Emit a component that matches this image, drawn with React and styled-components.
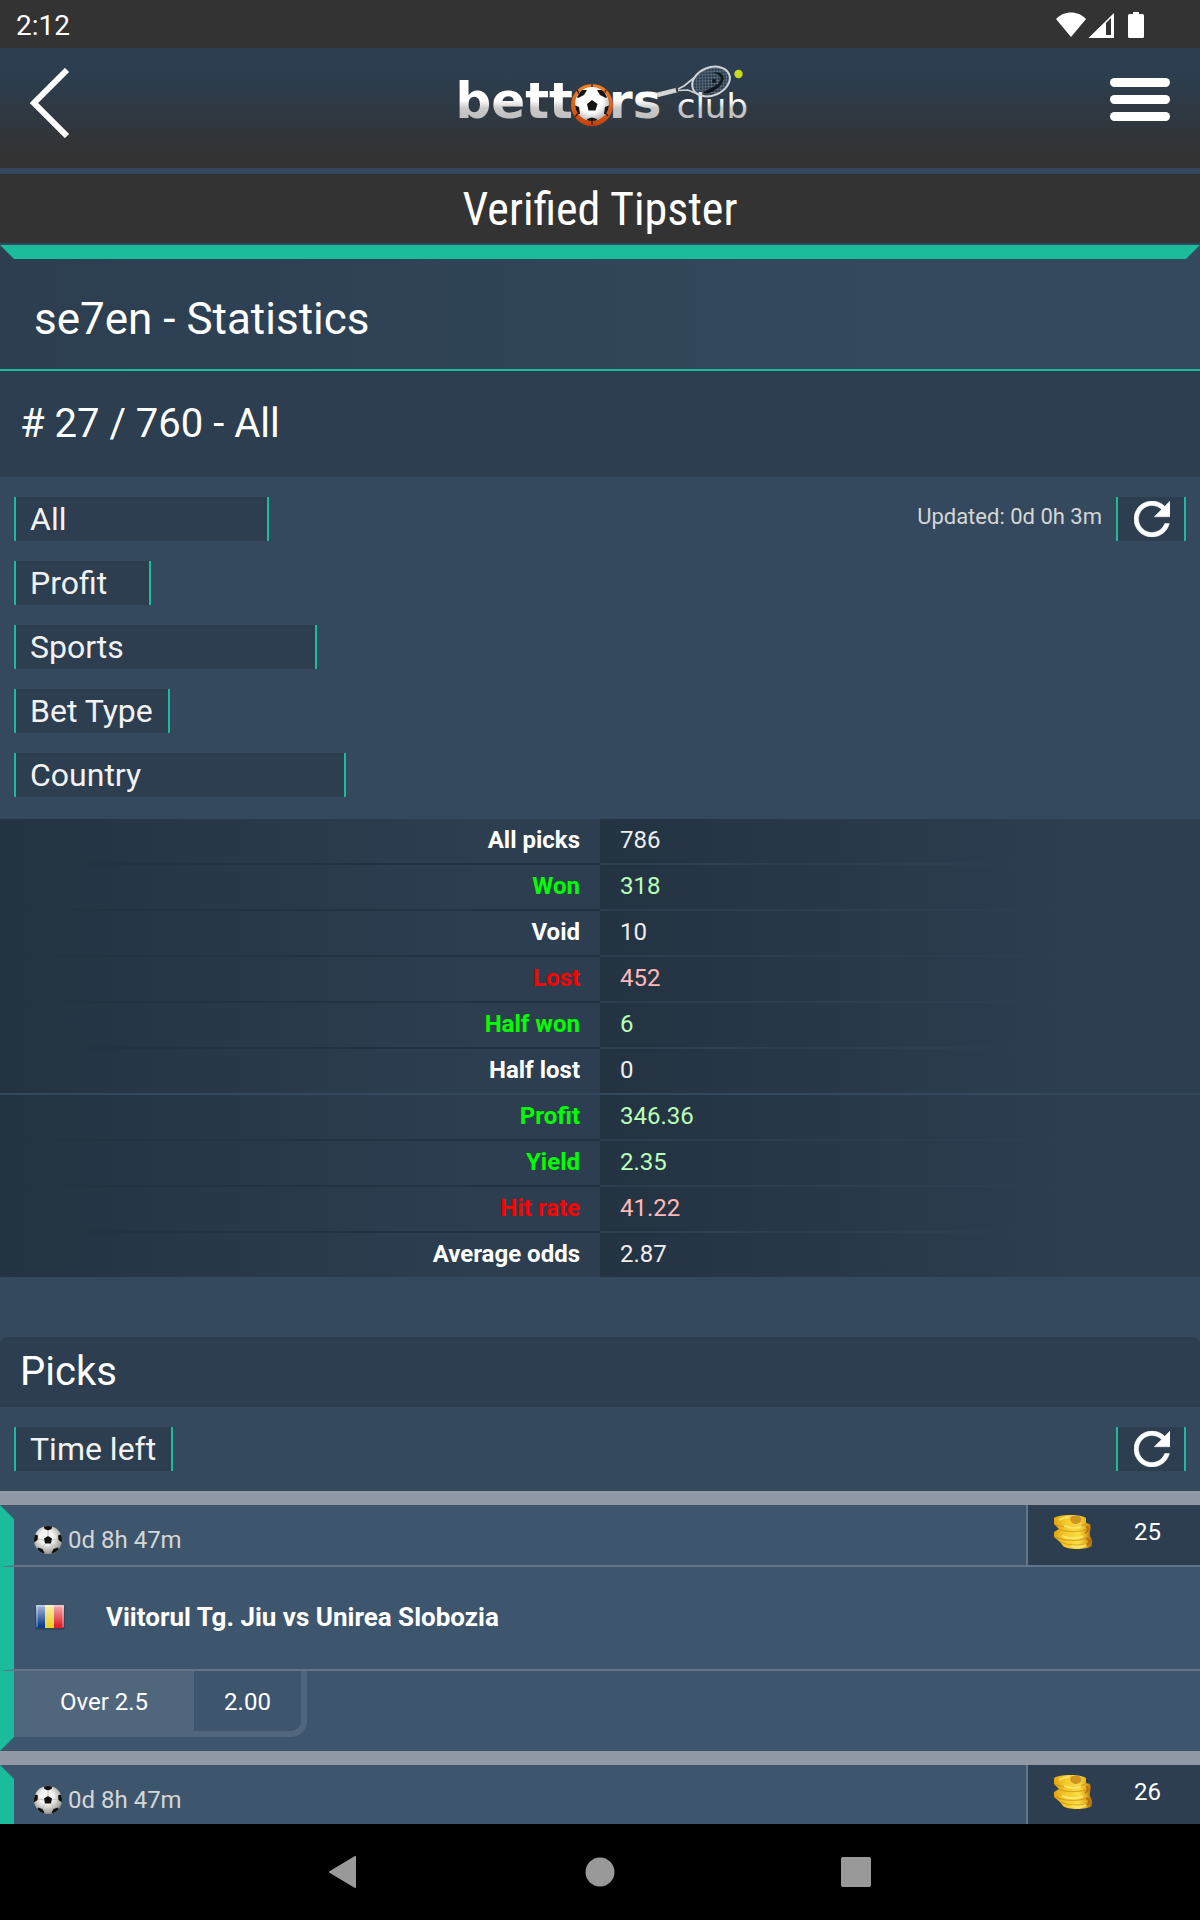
import React from "react";
import styled, { createGlobalStyle, css } from "styled-components";

const colors = {
  bar: "#333333",
  dark: "#2c3e50",
  darker: "#243342",
  base: "#34495e",
  card: "#3d566e",
  line: "#637588",
  accent: "#1abc9c",
  divider: "#9099a5",
  box: "#50667c"
};

const GlobalStyle = createGlobalStyle`
  * {
    box-sizing: border-box;
  }
  body {
    margin: 0;
    background: ${colors.base};
    color: #fff;
    font-family: Roboto, "Liberation Sans", sans-serif;
    font-size: 24px;
  }
  button, select {
    font-family: inherit;
    color: inherit;
    margin: 0;
    border-radius: 0;
  }
  svg {
    display: block;
  }
`;

const Screen = styled.div`
  display: flex;
  flex-direction: column;
  height: 100vh;
  overflow: hidden;
`;

const StatusBar = styled.div`
  display: flex;
  flex: none;
  justify-content: space-between;
  align-items: center;
  height: 48px;
  padding: 2px 56px 0 16px;
  background: ${colors.bar};
  font-size: 28px;
`;

const Header = styled.header`
  display: grid;
  flex: none;
  grid-template-columns: 1fr auto 1fr;
  align-items: center;
  height: 120px;
  padding: 0 30px 10px;
  margin-bottom: 6px;
  background: linear-gradient(${colors.dark} 20%, ${colors.bar} 90%);
`;

const IconButton = styled.button`
  padding: 0;
  border: 0;
  background: none;
  justify-self: ${props => (props.$end ? "end" : "start")};
`;

const Content = styled.main`
  flex: 1;
  min-height: 0;
  overflow: hidden;
`;

const PageTitle = styled.h1`
  height: 69px;
  margin: 0 0 2px;
  background: ${colors.bar};
  font-family: "Roboto Condensed", Roboto, sans-serif;
  font-size: 46px;
  font-weight: 400;
  line-height: 71px;
  text-align: center;
`;

const StatsTitle = styled.h2`
  margin: 0;
  padding: 0 20px;
  border: 14px solid transparent;
  border-top-color: ${colors.accent};
  border-bottom: 0;
  font-size: 44px;
  font-weight: 400;
  line-height: 120px;
  height: 124px;
`;

const StatsHeader = styled.div`
  background: linear-gradient(to right, ${colors.dark}, ${colors.base} 75%);
  border-bottom: 2px solid ${colors.accent};
`;

const SectionTitle = styled.h2`
  margin: 0;
  padding: 0 20px;
  background: ${colors.dark};
  border-radius: ${props => (props.$rounded ? "8px 8px 0 0" : "0")};
  font-size: 40px;
  font-weight: 400;
  line-height: ${props => (props.$rounded ? "70px" : "106px")};
`;

const Toolbar = styled.div`
  display: flex;
  align-items: flex-start;
  justify-content: space-between;
  padding: 20px 14px;
`;

const Filters = styled.div`
  display: flex;
  flex-direction: column;
  gap: 20px;
`;

const edged = css`
  height: 44px;
  border: solid ${colors.accent};
  border-width: 0 2px;
  background: ${colors.dark};
`;

const Select = styled.select`
  ${edged}
  appearance: none;
  width: ${props => props.$width}px;
  padding: 0 14px;
  color: #f2f2f2;
  font-size: 32px;
`;

const Reload = styled.div`
  display: flex;
  gap: 14px;
  color: #d6d6d6;
  font-size: 22px;
  line-height: 40px;
`;

const ReloadButton = styled.button`
  ${edged}
  display: flex;
  align-items: center;
  justify-content: center;
  width: 70px;
  padding: 0 0 0 2px;
`;

const StatsTable = styled.table`
  width: 100%;
  margin: 2px 0 60px;
  border-collapse: collapse;
  table-layout: fixed;
`;

const labelTones = { good: "#00ff00", bad: "#ff0000" };
const valueTones = { good: "#b9ffb9", bad: "#ffb9b9" };

const cell = css`
  height: 46px;
  padding: 0 20px;
  background: linear-gradient(to right, ${colors.darker}, ${colors.dark} 80%);
  line-height: 42px;
  vertical-align: top;

  tr:last-child > & {
    height: 44px;
    box-shadow: none;
  }
`;

const StatLabel = styled.th`
  ${cell}
  width: 50%;
  box-shadow: inset 0 -2px ${props => (props.$split ? colors.base : colors.darker)};
  color: ${props => labelTones[props.$tone] || "#fff"};
  text-align: right;
`;

const StatValue = styled.td`
  ${cell}
  box-shadow: inset 0 -2px ${props => (props.$split ? colors.base : colors.dark)};
  color: ${props => valueTones[props.$tone] || "#eee"};
`;

const Pick = styled.article`
  border-top: 14px solid ${colors.divider};
  background: ${colors.card};
`;

const PickTop = styled.div`
  display: flex;
  justify-content: space-between;
  height: 62px;
`;

// the mitred corner comes from the thick top border meeting the left one
const PickTime = styled.div`
  display: flex;
  flex: 1;
  gap: 6px;
  padding: 0 20px;
  border-left: 14px solid ${colors.accent};
  border-top: 14px solid ${colors.card};
  border-bottom: 2px solid ${colors.line};
  color: #d6d6d6;
  line-height: 42px;

  svg {
    margin-top: 7px;
  }
`;

const Stake = styled.div`
  display: flex;
  justify-content: space-between;
  width: 174px;
  padding: 10px 39px 0 26px;
  border-left: 2px solid ${colors.line};
  border-bottom: 2px solid ${colors.line};
  background: ${colors.dark};
  line-height: 34px;
`;

const Match = styled.h3`
  display: flex;
  align-items: center;
  gap: 40px;
  height: 104px;
  margin: 0;
  padding: 0 20px 2px;
  border-left: 14px solid ${colors.accent};
  border-bottom: 2px solid ${colors.line};
  font-size: 26px;
  line-height: 34px;
`;

const BetRow = styled.div`
  display: flex;
  height: 80px;
  border-left: 14px solid ${colors.accent};
  border-bottom: 14px solid ${colors.card};
`;

const Bet = styled.div`
  display: flex;
  background: ${colors.card};
  border: solid ${colors.box};
  border-width: 0 6px 6px 0;
  border-radius: 0 0 16px 0;
  line-height: 62px;
`;

const BetName = styled.div`
  width: 180px;
  height: 66px;
  background: ${colors.box};
  text-align: center;
`;

const BetOdds = styled.div`
  width: 107px;
  text-align: center;
`;

const NavBar = styled.nav`
  display: flex;
  flex: none;
  justify-content: center;
  gap: 160px;
  height: 96px;
  background: #000;
`;

const NavButton = styled.button`
  display: flex;
  align-items: center;
  justify-content: center;
  width: 96px;
  padding: 0;
  border: 0;
  background: none;
`;

const Logo = () => (
  <svg width="300" height="80" viewBox="450 63 300 80" role="img" aria-label="bettors club">
    <defs>
      <linearGradient id="word" gradientUnits="userSpaceOnUse" x1="0" y1="86" x2="0" y2="118">
        <stop offset="0.45" stopColor="#fff" />
        <stop offset="0.7" stopColor="#c9c9c9" />
        <stop offset="1" stopColor="#c0c0c0" />
      </linearGradient>
      <radialGradient id="leather" cx="0.45" cy="0.4" r="0.6">
        <stop offset="0.6" stopColor="#fff" />
        <stop offset="1" stopColor="#b5b5b0" />
      </radialGradient>
      <linearGradient id="basket" x1="0" y1="0" x2="0" y2="1">
        <stop offset="0" stopColor="#f58220" />
        <stop offset="1" stopColor="#c4420c" />
      </linearGradient>
      <clipPath id="ballClip">
        <circle cx="592" cy="104" r="17" />
      </clipPath>
      <pattern id="strings" width="3" height="3" patternUnits="userSpaceOnUse" patternTransform="rotate(20)">
        <path d="M0 0H3M0 0V3" stroke="#8c9caa" strokeWidth="0.7" />
      </pattern>
    </defs>
    <g fill="url(#word)" fontFamily="'DejaVu Sans', sans-serif">
      <text x="573" y="118" fontSize="50" fontWeight="700" textAnchor="end">bett</text>
      <text x="609" y="118" fontSize="48" fontWeight="700">rs</text>
      <text x="748" y="118" fontSize="34" textAnchor="end">club</text>
    </g>
    <circle cx="592" cy="105" r="21" fill="url(#basket)" />
    <path d="M577 90C581 95 581 112 575 117M606 90C602 96 602 111 608 116M592 84V88M592 121V125" fill="none" stroke="#3a1606" strokeWidth="1.3" />
    <circle cx="592" cy="104" r="17" fill="url(#leather)" />
    <g clipPath="url(#ballClip)" fill="#151515">
      <path d="M587 104L592 100L597.5 104L595.5 110.5H588.5Z" />
      <path d="M577 97L581 90L587 90L584 95L578 98Z" />
      <path d="M607 97L603 90L597 90L600 95L606 98Z" />
      <path d="M574 105L579 107L580 114L575 114Z" />
      <path d="M610 105L605 107L604 114L609 114Z" />
      <path d="M587 119L592 117.5L597 119L596 123H588Z" />
    </g>
    <path d="M657 95L677 90" stroke="#d5d5d5" strokeWidth="4.5" />
    <path d="M676 90L679 89.3" stroke="#333" strokeWidth="4" />
    <path d="M678 89L684 86L695 77M678 90.5L688 90L700 95" fill="none" stroke="#cfd4d8" strokeWidth="1.7" />
    <g transform="rotate(-22 711 81.5)">
      <ellipse cx="711" cy="81.5" rx="19.5" ry="14" fill="url(#strings)" stroke="#cfd4d8" strokeWidth="2" />
    </g>
    <path d="M713 73C721 74 723 79 718 84C713 88 707 89 703 93C708 95 716 90 720 86C728 77 722 71 713 73Z" fill="#10181f" />
    <circle cx="714" cy="81" r="2" fill="#10181f" />
    <circle cx="738.5" cy="74" r="4.2" fill="#c8dc1e" />
  </svg>
);

const BackIcon = () => (
  <svg width="40" height="70" viewBox="0 0 40 70">
    <path d="M37 2L4 35L37 68" fill="none" stroke="#fff" strokeWidth="6" />
  </svg>
);

const MenuIcon = () => (
  <svg width="60" height="50" viewBox="0 0 60 50" fill="#fff">
    <rect width="60" height="9" rx="4.5" />
    <rect y="17" width="60" height="9" rx="4.5" />
    <rect y="34" width="60" height="9" rx="4.5" />
  </svg>
);

const StatusIcons = () => (
  <svg width="88" height="26" viewBox="0 0 88 26" fill="#fff">
    <path d="M0 7C8 -1.6 22 -1.6 30 7L15 25Z" />
    <path fillRule="evenodd" d="M32.5 26L58 1V26ZM50 11V23H55V6Z" />
    <rect x="72" y="2" width="16" height="24" rx="1.5" />
    <rect x="77" width="6" height="4" />
  </svg>
);

const ReloadIcon = () => (
  <svg width="36" height="36" viewBox="4 4 16 16" fill="#fff">
    <path
      d="M17.65 6.35C16.2 4.9 14.21 4 12 4c-4.42 0-7.99 3.58-7.99 8s3.57 8 7.99 8c3.73 0 6.84-2.55 7.73-6h-2.08c-.82 2.33-3.04 4-5.65 4-3.31 0-6-2.69-6-6s2.69-6 6-6c1.66 0 3.14.69 4.22 1.78L13 11h7V4l-2.35 2.35z"
      stroke="#fff"
      strokeWidth="0.2"
    />
  </svg>
);

const FootballIcon = () => (
  <svg width="28" height="28" viewBox="0 0 28 28">
    <defs>
      <radialGradient id="football" cx="0.45" cy="0.4" r="0.62">
        <stop offset="0.4" stopColor="#f4f4f2" />
        <stop offset="1" stopColor="#8f908c" />
      </radialGradient>
      <clipPath id="footballClip">
        <circle cx="14" cy="14" r="14" />
      </clipPath>
    </defs>
    <circle cx="14" cy="14" r="14" fill="url(#football)" />
    <g clipPath="url(#footballClip)" fill="#111">
      <path d="M14 10L18 12.5L17 17.5H11L10 12.5Z" />
      <path d="M9.5 0H18.5L17.5 3L14 4.5L10.5 3Z" />
      <path d="M0 8L4 9.5L3.5 14L0 16.5Z" />
      <path d="M28 8L24 9.5L24.5 14L28 16.5Z" />
      <path d="M4 21.5L8.5 23L10.5 27L7 28L3 24Z" />
      <path d="M24 21.5L19.5 23L17.5 27L21 28L25 24Z" />
    </g>
    <path d="M14 4V10M4 13L10 14M24 13L18 14M8 22L11 18M20 22L17 18" stroke="#c4c4c0" strokeWidth="1" />
  </svg>
);

const FlagIcon = () => (
  <svg width="32" height="28" viewBox="0 0 32 28">
    <defs>
      <linearGradient id="gloss" x1="0" y1="0" x2="0" y2="1">
        <stop offset="0" stopColor="#fff" stopOpacity="0.65" />
        <stop offset="0.9" stopColor="#fff" stopOpacity="0" />
      </linearGradient>
    </defs>
    <rect x="1" y="3" width="30" height="24" rx="2" fill="#1d2b3a" opacity="0.35" />
    <rect x="2" y="2" width="10" height="23" fill="#0c3c8c" />
    <rect x="11" y="2" width="9" height="23" fill="#efd02c" />
    <rect x="20" y="2" width="10" height="23" fill="#e0202c" />
    <rect x="2" y="2" width="28" height="23" fill="url(#gloss)" />
    <path d="M3 24V3H29V24" fill="none" stroke="#fff" strokeOpacity="0.35" strokeWidth="1.5" />
  </svg>
);

const CoinsIcon = () => (
  <svg width="38" height="34" viewBox="0 0 38 34">
    <defs>
      <linearGradient id="gold" x1="0" y1="0" x2="1" y2="0">
        <stop offset="0" stopColor="#e0a512" />
        <stop offset="0.3" stopColor="#f4c92c" />
        <stop offset="0.65" stopColor="#f8dc44" />
        <stop offset="0.85" stopColor="#e3ab20" />
        <stop offset="1" stopColor="#a9620a" />
      </linearGradient>
    </defs>
    <path
      d="M0 3C5 -1 27 -1 32 3V8L36 9C38 14 35 17 36 21L38 25V31C33 35 13 35 9 31L6 27L0 22V17L5 14L0 9Z"
      fill="url(#gold)"
    />
    <path d="M0 9C8 13 26 13 33 8M5 14C13 18 30 17 36 13M0 21C9 27 28 27 36 21M7 27C14 31 31 31 38 27" fill="none" stroke="#c98a14" strokeWidth="1.2" strokeOpacity="0.6" />
    <path d="M18 1C15 3 16 8 21 9C28 9 29 3 25 1Z" fill="#c5851a" opacity="0.8" />
    <path d="M32 11C35 13 34 17 31 18M32 24C36 23 36 28 33 30" fill="none" stroke="#a9620a" strokeWidth="2" strokeOpacity="0.7" />
    <path d="M5 5C8 3 12 2 15 2M8 21C14 24 24 24 29 21M10 11C16 13 22 13 27 11M17 31C22 32 28 32 32 30" fill="none" stroke="#ffeb6e" strokeWidth="2" strokeOpacity="0.8" />
  </svg>
);

const filters = [
  { label: "All", width: 255 },
  { label: "Profit", width: 137 },
  { label: "Sports", width: 303 },
  { label: "Bet Type", width: 156 },
  { label: "Country", width: 332 }
];

const stats = [
  { label: "All picks", value: "786" },
  { label: "Won", value: "318", tone: "good" },
  { label: "Void", value: "10" },
  { label: "Lost", value: "452", tone: "bad" },
  { label: "Half won", value: "6", tone: "good" },
  { label: "Half lost", value: "0", split: true },
  { label: "Profit", value: "346.36", tone: "good" },
  { label: "Yield", value: "2.35", tone: "good" },
  { label: "Hit rate", value: "41.22", tone: "bad" },
  { label: "Average odds", value: "2.87" }
];

const picks = [
  { time: "0d 8h 47m", stake: 25, match: "Viitorul Tg. Jiu vs Unirea Slobozia", bet: "Over 2.5", odds: "2.00" },
  { time: "0d 8h 47m", stake: 26 }
];

const PickItem = ({ pick }) => (
  <Pick>
    <PickTop>
      <PickTime>
        <FootballIcon />
        {pick.time}
      </PickTime>
      <Stake>
        <CoinsIcon />
        {pick.stake}
      </Stake>
    </PickTop>
    {pick.match && (
      <>
        <Match>
          <FlagIcon />
          {pick.match}
        </Match>
        <BetRow>
          <Bet>
            <BetName>{pick.bet}</BetName>
            <BetOdds>{pick.odds}</BetOdds>
          </Bet>
        </BetRow>
      </>
    )}
  </Pick>
);

const FilterSelect = ({ label, width }) => (
  <Select $width={width} aria-label={label}>
    <option>{label}</option>
  </Select>
);

export default function App() {
  return (
    <Screen>
      <GlobalStyle />
      <StatusBar>
        2:12
        <StatusIcons />
      </StatusBar>
      <Header>
        <IconButton aria-label="Back">
          <BackIcon />
        </IconButton>
        <Logo />
        <IconButton $end aria-label="Menu">
          <MenuIcon />
        </IconButton>
      </Header>
      <Content>
        <PageTitle>Verified Tipster</PageTitle>
        <StatsHeader>
          <StatsTitle>se7en - Statistics</StatsTitle>
        </StatsHeader>
        <SectionTitle># 27 / 760 - All</SectionTitle>
        <Toolbar>
          <Filters>
            {filters.map(filter => (
              <FilterSelect key={filter.label} {...filter} />
            ))}
          </Filters>
          <Reload>
            Updated: 0d 0h 3m
            <ReloadButton aria-label="Reload statistics">
              <ReloadIcon />
            </ReloadButton>
          </Reload>
        </Toolbar>
        <StatsTable>
          <tbody>
            {stats.map(stat => (
              <tr key={stat.label}>
                <StatLabel scope="row" $tone={stat.tone} $split={stat.split}>
                  {stat.label}
                </StatLabel>
                <StatValue $tone={stat.tone} $split={stat.split}>
                  {stat.value}
                </StatValue>
              </tr>
            ))}
          </tbody>
        </StatsTable>
        <SectionTitle $rounded>Picks</SectionTitle>
        <Toolbar>
          <FilterSelect label="Time left" width={159} />
          <ReloadButton aria-label="Reload picks">
            <ReloadIcon />
          </ReloadButton>
        </Toolbar>
        {picks.map(pick => (
          <PickItem key={pick.stake} pick={pick} />
        ))}
      </Content>
      <NavBar>
        <NavButton aria-label="System back">
          <svg width="32" height="32" viewBox="0 0 32 32">
            <path d="M2 16L27 1V31Z" fill="#999" stroke="#999" strokeWidth="2" strokeLinejoin="round" />
          </svg>
        </NavButton>
        <NavButton aria-label="Home">
          <svg width="30" height="30" viewBox="0 0 30 30">
            <circle cx="15" cy="15" r="14.5" fill="#999" />
          </svg>
        </NavButton>
        <NavButton aria-label="Recent apps">
          <svg width="30" height="30" viewBox="0 0 30 30">
            <rect width="30" height="30" rx="2" fill="#999" />
          </svg>
        </NavButton>
      </NavBar>
    </Screen>
  );
}
